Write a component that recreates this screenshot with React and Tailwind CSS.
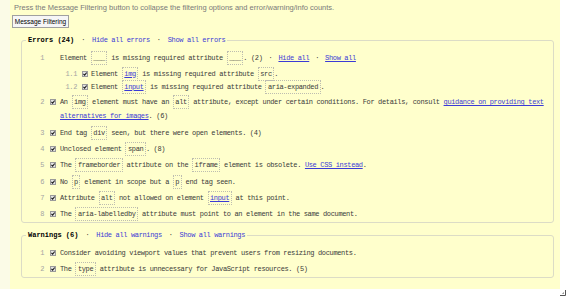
import React from "react";

const LINK = "text-[#3b3bd6]";

function Code({ children, link }) {
  return (
    <span className="border border-dotted border-[#bdbdb0] px-[1.5px] py-[2px]">
      {link ? <a className={`${LINK} underline`}>{children}</a> : children}
    </span>
  );
}

function Check() {
  return (
    <span className="flex h-[6px] w-[6px] items-center justify-center border border-[#9a9a9a] bg-[#e4e4e4]">
      <svg width="4" height="4" viewBox="0 0 4 4">
        <path d="M0.4 1.9 L1.6 3.2 L3.7 0.5" stroke="#222" strokeWidth="1.1" fill="none" />
      </svg>
    </span>
  );
}

function Dot({ wide }) {
  return <span className={wide ? "mx-[7px] text-[#333]" : "mx-[6px] text-[#333]"}>·</span>;
}

function Row({ n, check = true, gap = "mt-[2.3px]", children }) {
  return (
    <div className={`${gap} flex leading-[14px] first:mt-0`}>
      <span className="w-[22px] shrink-0 text-right text-[#a3a3a3]">{n}</span>
      <span className="w-[16px] shrink-0 pl-[6px] pt-[4px]">{check && <Check />}</span>
      <div className="min-w-0 flex-1">{children}</div>
    </div>
  );
}

function SubRow({ n, first, children }) {
  return (
    <div className={`flex leading-[13px] ${first ? "mt-[2.5px]" : ""}`}>
      <span className="w-[17px] shrink-0 text-right text-[#a3a3a3]">{n}</span>
      <span className="w-[14px] shrink-0 pl-[5px] pt-[3.5px]">
        <Check />
      </span>
      <div className="min-w-0 flex-1">{children}</div>
    </div>
  );
}

function Legend({ title, hide, show }) {
  return (
    <legend className="ml-[4px] px-[2px] leading-[14px]">
      <b className="tracking-[0px] text-black">{title}</b>
      <Dot wide />
      <a className={LINK}>{hide}</a>
      <Dot wide />
      <a className={LINK}>{show}</a>
    </legend>
  );
}

export default function App() {
  return (
    <div className="relative h-[298px] w-[569px] overflow-hidden bg-white">
      <div className="flex">
        <div className="h-[289px] w-[10px] bg-[#fbfbe7]" />
        <div className="h-[289px] w-[550px] bg-[#ffffcc] pt-[3px]">
          <p className="ml-[4px] font-['Liberation_Sans',Arial,sans-serif] text-[7.5px] leading-[10px] text-[#7a7a7a]">
            Press the Message Filtering button to collapse the filtering options and error/warning/info counts.
          </p>
          <button className="ml-[2px] mt-[2px] block h-[13px] w-[57px] border border-[#a0a0a0] bg-[#f6f6f6] font-['Liberation_Sans',Arial,sans-serif] text-[6.5px] leading-[11px] text-black">
            Message Filtering
          </button>

          <div className="font-['Liberation_Mono','Courier_New',monospace] text-[7px] tracking-[-0.35px] text-[#3a3a3a]">
            <fieldset className="ml-[11px] mt-[5px] w-[533px] rounded-[3px] border border-[#dcdcc6] pb-[1px] pt-[2px]">
              <Legend title="Errors (24)" hide="Hide all errors" show="Show all errors" />
              <Row n="1" check={false}>
                <div>
                  Element <Code>___</Code> is missing required attribute <Code>___</Code>. (2)
                  <Dot />
                  <a className={`${LINK} underline`}>Hide all</a>
                  <Dot />
                  <a className={`${LINK} underline`}>Show all</a>
                </div>
                <SubRow n="1.1" first>
                  Element <Code link>img</Code> is missing required attribute <Code>src</Code>.
                </SubRow>
                <SubRow n="1.2">
                  Element <Code link>input</Code> is missing required attribute <Code>aria-expanded</Code>.
                </SubRow>
              </Row>
              <Row n="2" gap="mt-[1.7px]">
                An <Code>img</Code> element must have an <Code>alt</Code> attribute, except under certain
                conditions. For details, consult{" "}
                <a className={`${LINK} underline`}>guidance on providing text alternatives for images</a>. (6)
              </Row>
              <Row n="3">
                End tag <Code>div</Code> seen, but there were open elements. (4)
              </Row>
              <Row n="4">
                Unclosed element <Code>span</Code>. (8)
              </Row>
              <Row n="5">
                The <Code>frameborder</Code> attribute on the <Code>iframe</Code> element is obsolete.{" "}
                <a className={`${LINK} underline`}>Use CSS instead</a>.
              </Row>
              <Row n="6">
                No <Code>p</Code> element in scope but a <Code>p</Code> end tag seen.
              </Row>
              <Row n="7">
                Attribute <Code>alt</Code> not allowed on element <Code link>input</Code> at this point.
              </Row>
              <Row n="8">
                The <Code>aria-labelledby</Code> attribute must point to an element in the same document.
              </Row>
            </fieldset>

            <fieldset className="ml-[11px] mt-[5px] w-[533px] rounded-[3px] border border-[#dcdcc6] pb-[1px] pt-[1px]">
              <Legend title="Warnings (6)" hide="Hide all warnings" show="Show all warnings" />
              <Row n="1">Consider avoiding viewport values that prevent users from resizing documents.</Row>
              <Row n="2" gap="mt-[2px]">
                The <Code>type</Code> attribute is unnecessary for JavaScript resources. (5)
              </Row>
            </fieldset>
          </div>
        </div>
      </div>
      <svg className="absolute bottom-[2px] right-[3px]" width="6" height="6" viewBox="0 0 6 6">
        <path d="M0 5.5 H5.5 V0" stroke="#555" strokeWidth="1" fill="none" />
        <path d="M2.5 3.5 H3.5 V2.5" stroke="#777" strokeWidth="1" fill="none" />
      </svg>
    </div>
  );
}
